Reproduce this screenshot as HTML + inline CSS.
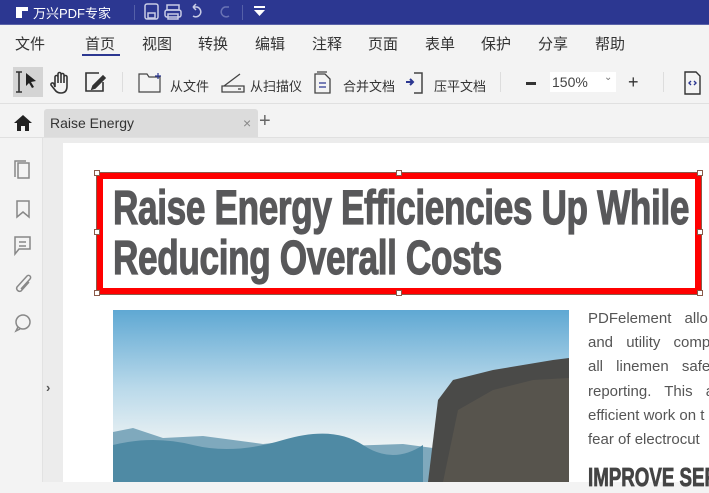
<!DOCTYPE html>
<html><head><meta charset="utf-8"><style>
*{margin:0;padding:0;box-sizing:border-box}
body{width:709px;height:482px;overflow:hidden;position:relative;background:#f3f3f3;font-family:"Liberation Sans","Noto Sans CJK SC",sans-serif}
.a{position:absolute}
.title{left:0;top:0;width:709px;height:25px;background:#2c3791;border-bottom:1px solid #5a63a8}
.menu span{position:absolute;top:33px;font-size:15px;color:#333}
.tb{font-size:13px;color:#333}
</style></head><body>
<div class="a title">
 <div class="a" style="left:16px;top:7px;width:6px;height:11px;background:#fff"></div>
 <div class="a" style="left:22px;top:7px;width:6px;height:4px;background:#fff"></div>
 <div class="a" style="left:33px;top:3px;color:#fff;font-size:13px">万兴PDF专家</div>
 <div class="a" style="left:134px;top:5px;width:1px;height:15px;background:#5560a8"></div>
 <svg class="a" style="left:143px;top:2px" width="100" height="20" fill="none" stroke="#c8cce6" stroke-width="1.5">
  <rect x="2" y="2" width="13" height="15" rx="2"/><rect x="5" y="11" width="7" height="5"/>
  <rect x="24" y="3" width="12" height="5"/><rect x="22" y="8" width="16" height="7" rx="2"/><rect x="25" y="12" width="10" height="5"/>
  <path d="M50 5 h4 a5 5 0 1 1 -4 9 M50 5 l3 -3 M50 5 l3 3"/>
  <path d="M86 5 h-4 a5 5 0 1 0 4 9" stroke="#6a73b5"/>
 </svg>
 <div class="a" style="left:242px;top:5px;width:1px;height:15px;background:#5560a8"></div>
 <svg class="a" style="left:254px;top:6px" width="12" height="12"><rect x="0" y="0" width="11" height="2" fill="#fff"/><path d="M0 4 h11 l-5.5 6z" fill="#fff"/></svg>
</div>
<div class="menu">
 <span style="left:15px">文件</span><span style="left:85px">首页</span><span style="left:142px">视图</span><span style="left:198px">转换</span><span style="left:255px">编辑</span><span style="left:312px">注释</span><span style="left:368px">页面</span><span style="left:425px">表单</span><span style="left:481px">保护</span><span style="left:538px">分享</span><span style="left:595px">帮助</span>
</div>
<div class="a" style="left:82px;top:54px;width:38px;height:2px;background:#2c3791"></div>
<div class="a" style="left:13px;top:67px;width:30px;height:30px;background:#d4d4d4"></div>
<svg class="a" style="left:13px;top:67px" width="100" height="30" fill="none" stroke="#333" stroke-width="1.6">
 <path d="M6 5 v20 M3 5 h6 M3 25 h6"/><path d="M13 6 l10 8 -5 1 3 5 -2 1 -3 -5 -3 3z" fill="#222" stroke="none"/>
 <path d="M42 20 v-10 a1.5 1.5 0 0 1 3 0 v6 v-9 a1.5 1.5 0 0 1 3 0 v9 v-8 a1.5 1.5 0 0 1 3 0 v8 v-6 a1.5 1.5 0 0 1 3 0 v9 q0 7 -6 7 q-4 0 -6 -3 l-4 -5 a1.5 1.5 0 0 1 3 -1z"/>
 <path d="M86 6 h-13 v18 h17 v-9"/><path d="M80 19 l10 -10 2 2 -10 10 -3 1z" fill="#333"/>
</svg>
<div class="a" style="left:122px;top:72px;width:1px;height:20px;background:#ddd"></div>
<svg class="a" style="left:138px;top:70px" width="28" height="24" fill="none" stroke="#444" stroke-width="1.2"><path d="M1 4 h8 l2 3 h11 v15 h-21z"/><path d="M20 3 v6 M17 6 h6" stroke="#2c3791"/></svg>
<div class="a tb" style="left:170px;top:76px">从文件</div>
<svg class="a" style="left:220px;top:70px" width="26" height="24" fill="none" stroke="#444" stroke-width="1.3"><path d="M2 22 h22 v-6 h-22z M4 16 l16 -12"/><path d="M18 19 h3"/></svg>
<div class="a tb" style="left:250px;top:76px">从扫描仪</div>
<svg class="a" style="left:313px;top:71px" width="22" height="24" fill="none" stroke="#444" stroke-width="1.3"><path d="M2 3 h10 l5 5 v14 h-15z M4 1 h10"/><path d="M6 12 h7 M6 16 h7" stroke="#2c3791"/></svg>
<div class="a tb" style="left:343px;top:76px">合并文档</div>
<svg class="a" style="left:404px;top:71px" width="22" height="24" fill="none" stroke-width="1.5"><path d="M10 2 h8 v20 h-8" stroke="#444"/><path d="M2 11 h7 M6 8 l3 3 -3 3" stroke="#2c3791" stroke-width="2"/></svg>
<div class="a tb" style="left:434px;top:76px">压平文档</div>
<div class="a" style="left:500px;top:72px;width:1px;height:20px;background:#ddd"></div>
<div class="a" style="left:526px;top:82px;width:10px;height:3px;background:#333"></div>
<div class="a" style="left:550px;top:72px;width:66px;height:20px;background:#fff;font-size:14px;color:#444;padding:2px 0 0 2px">150%<span style="position:absolute;left:54px;top:0;font-size:10px;color:#777">⌄</span></div>
<div class="a" style="left:628px;top:72px;font-size:18px;color:#333">+</div>
<div class="a" style="left:663px;top:72px;width:1px;height:20px;background:#ddd"></div>
<svg class="a" style="left:683px;top:70px" width="20" height="26" fill="none" stroke="#333" stroke-width="1.4"><path d="M2 2 h11 l4 4 v18 h-15z"/><path d="M8 11 l-2 2 2 2 M11 11 l2 2 -2 2" stroke="#2c3791"/></svg>
<div class="a" style="left:0;top:103px;width:709px;height:1px;background:#e0e0e0"></div>
<svg class="a" style="left:13px;top:114px" width="20" height="18"><path d="M10 1 l9 8 h-3 v8 h-4 v-5 h-4 v5 h-4 v-8 h-3z" fill="#222"/></svg>
<div class="a" style="left:44px;top:109px;width:214px;height:28px;background:#dcdcdc;border-radius:3px 3px 0 0"></div>
<div class="a" style="left:50px;top:115px;font-size:14px;color:#333">Raise Energy</div>
<div class="a" style="left:243px;top:115px;font-size:14px;color:#888">×</div>
<div class="a" style="left:259px;top:111px;font-size:20px;color:#666;line-height:20px">+</div>
<div class="a" style="left:0;top:137px;width:709px;height:1px;background:#e0e0e0"></div>
<div class="a" style="left:42px;top:138px;width:1px;height:344px;background:#e2e2e2"></div>
<div class="a" style="left:43px;top:138px;width:666px;height:344px;background:#ececec"></div>
<svg class="a" style="left:12px;top:158px" width="22" height="180" fill="none" stroke="#888" stroke-width="1.5">
 <path d="M6 5 h11 v15 h-11z M3 19 v-16 h11"/>
 <path d="M5 59 v-16 h12 v16 l-6 -5z"/>
 <path d="M3 96 v-17 h15 v12 h-11z M7 84 h7 M7 88 h7"/>
 <path d="M17 124 l-8 9 a3 3 0 0 1 -4 -4 l10 -11 a2 2 0 0 1 3 3 l-9 10"/>
 <circle cx="11" cy="164" r="7"/><path d="M6 169 l-2 4 4 -2"/>
</svg>
<div class="a" style="left:46px;top:380px;font-size:13px;color:#555;font-weight:bold">›</div>
<div class="a" style="left:63px;top:143px;width:646px;height:339px;background:#fff"></div>
<div class="a" style="left:97px;top:173px;width:604px;height:121px;border:6px solid #f00;box-shadow:0 0 0 1px #8a5a4a"></div>
<div class="a" style="left:113px;top:184px;font-weight:bold;font-size:48px;line-height:50px;color:#58585a;white-space:nowrap;transform:scaleX(0.733);transform-origin:left top;letter-spacing:-0.5px;-webkit-text-stroke:1.2px #58585a">Raise Energy Efficiencies Up While<br>Reducing Overall Costs</div>
<div class="a" style="left:94px;top:170px;width:6px;height:6px;background:#fff;border:1px solid #8a5a4a"></div>
<div class="a" style="left:396px;top:170px;width:6px;height:6px;background:#fff;border:1px solid #8a5a4a"></div>
<div class="a" style="left:697px;top:170px;width:6px;height:6px;background:#fff;border:1px solid #8a5a4a"></div>
<div class="a" style="left:94px;top:229px;width:6px;height:6px;background:#fff;border:1px solid #8a5a4a"></div>
<div class="a" style="left:697px;top:229px;width:6px;height:6px;background:#fff;border:1px solid #8a5a4a"></div>
<div class="a" style="left:94px;top:290px;width:6px;height:6px;background:#fff;border:1px solid #8a5a4a"></div>
<div class="a" style="left:396px;top:290px;width:6px;height:6px;background:#fff;border:1px solid #8a5a4a"></div>
<div class="a" style="left:697px;top:290px;width:6px;height:6px;background:#fff;border:1px solid #8a5a4a"></div>
<svg class="a" style="left:113px;top:310px" width="456" height="172">
 <defs><linearGradient id="s" x1="0" y1="0" x2="0" y2="1"><stop offset="0" stop-color="#5fa8d3"/><stop offset="0.45" stop-color="#b9d9ea"/><stop offset="0.8" stop-color="#eef3f4"/></linearGradient></defs>
 <rect width="456" height="172" fill="url(#s)"/>
 <path d="M0 122 l20 -4 30 10 40 -2 60 8 40 -4 40 6 60 -2 30 4 V172 H0z" fill="#7fa9bd"/>
 <path d="M0 135 q40 -10 80 0 t90 -5 t80 5 t60 0 V172 H0z" fill="#4f8aa4"/>
 <path d="M315 172 L325 90 L340 70 L380 60 L410 55 L440 50 L456 48 V172z" fill="#4a4a48"/>
 <path d="M330 172 L345 100 L380 80 L420 70 L456 68 V172z" fill="#5c5850" opacity="0.7"/>
</svg>
<div class="a" style="left:588px;top:307px;font-size:15px;line-height:24.2px;color:#555;white-space:nowrap;word-spacing:9px">PDFelement allo<br>and utility comp<br>all linemen safe<br>reporting. This a<br><span style="word-spacing:0">efficient work on t<br>fear of electrocut</span></div>
<div class="a" style="left:588px;top:462px;font-weight:bold;font-size:26px;color:#444;white-space:nowrap;transform:scaleX(0.72);transform-origin:left top;-webkit-text-stroke:0.8px #444">IMPROVE SEF</div>
</body></html>
